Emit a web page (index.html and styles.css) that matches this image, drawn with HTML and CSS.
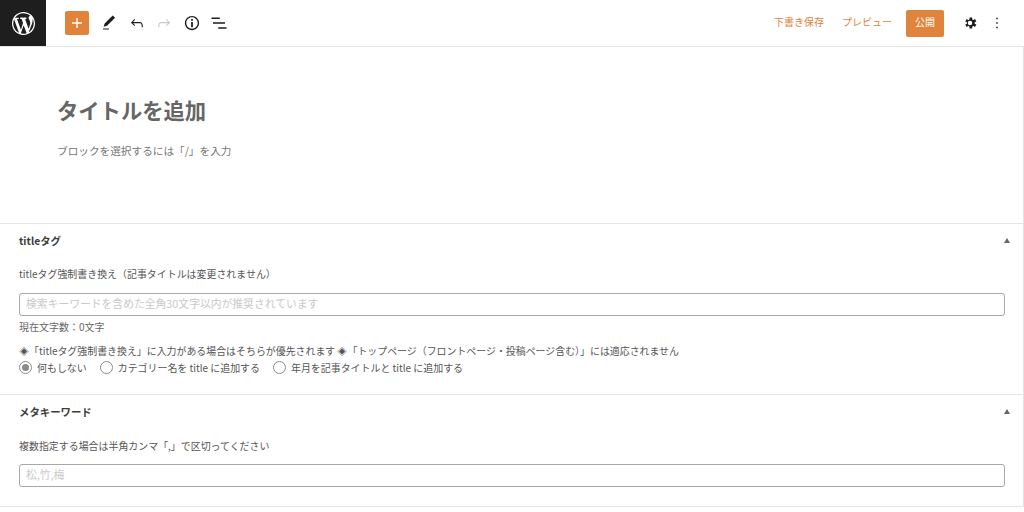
FILE: index.html
```html
<!DOCTYPE html>
<html lang="ja">
<head>
<meta charset="utf-8">
<title>タイトルを追加</title>
<link rel="stylesheet" href="styles.css">
</head>
<body>
<header class="topbar">
  <div class="topbar-left">
    <div class="wp-logo">
      <svg viewBox="0 0 20 20" class="wp-icon"><path fill="#fff" d="M20 10c0-5.51-4.49-10-10-10C4.48 0 0 4.49 0 10c0 5.52 4.48 10 10 10 5.51 0 10-4.48 10-10zM7.78 15.37L4.37 6.22c.55-.02 1.17-.08 1.17-.08.5-.06.44-1.13-.06-1.11 0 0-1.45.11-2.37.11-.18 0-.37 0-.58-.01C4.12 2.69 6.87 1.11 10 1.11c2.33 0 4.45.87 6.05 2.34-.68-.11-1.65.39-1.65 1.58 0 .74.45 1.36.9 2.1.35.61.55 1.36.55 2.46 0 1.49-1.4 5-1.4 5l-3.03-8.37c.54-.02.82-.17.82-.17.5-.05.44-1.25-.06-1.22 0 0-1.44.12-2.38.12-.87 0-2.33-.12-2.33-.12-.5-.03-.56 1.2-.06 1.22l.92.08 1.26 3.41zM17.41 10c.24-.64.74-1.87.43-4.25.7 1.29 1.05 2.71 1.05 4.25 0 3.29-1.73 6.24-4.4 7.78.97-2.59 1.94-5.2 2.92-7.78zM6.1 18.09C3.12 16.65 1.11 13.53 1.11 10c0-1.3.23-2.48.72-3.59C3.25 10.3 4.67 14.2 6.1 18.09zm4.03-6.63l2.58 6.98c-.86.29-1.76.45-2.71.45-.79 0-1.57-.11-2.29-.33.81-2.38 1.62-4.74 2.42-7.1z"/></svg>
    </div>
    <div class="tools">
      <button class="add-btn"><svg viewBox="0 0 24 24" class="plus"><path fill="#fff" d="M18 11.2h-5.2V6h-1.6v5.2H6v1.6h5.2V18h1.6v-5.2H18z"/></svg></button>
      <svg viewBox="0 0 24 24" class="tool"><path fill="#1e1e1e" d="M20.1 5.100L16.900 2 6.200 12.700l-1.300 4.400 4.500-1.300L20.100 5.100zM4 20.800h8v-1.500H4v1.500z"/></svg>
      <svg viewBox="0 0 24 24" class="tool"><path fill="#1e1e1e" d="M18.300 11.700c-.6-.6-1.400-.9-2.300-.9H6.700l2.900-3.300-1.100-1-4.500 5L8.500 16l1-1-2.700-2.700H16c.5 0 .9.2 1.300.5 1 1 1 3.400 1 4.500v.3h1.500v-.2c0-1.500 0-4.300-1.500-5.700z"/></svg>
      <svg viewBox="0 0 24 24" class="tool"><path fill="#c9c9c9" d="M15.600 6.500l-1.100 1 2.900 3.300H8c-.9 0-1.700.3-2.300.9-1.400 1.500-1.400 4.200-1.400 5.600v.2h1.500v-.3c0-1.100 0-3.500 1-4.500.3-.3.7-.5 1.300-.5h9.200L14.500 15l1.100 1.100 4.600-4.600-4.600-5z"/></svg>
      <svg viewBox="0 0 24 24" class="tool"><path fill="#1e1e1e" d="M12 2.500c-5.200 0-9.500 4.300-9.500 9.500s4.300 9.500 9.500 9.500 9.500-4.300 9.500-9.500-4.300-9.500-9.500-9.500zm0 17.100c-4.200 0-7.600-3.400-7.600-7.600S7.800 4.400 12 4.400s7.600 3.400 7.600 7.600-3.400 7.600-7.600 7.600zM10.800 17.500h2.400v-6.800h-2.400v6.800zm0-8.400h2.400V6.700h-2.400v2.400z"/></svg>
      <svg viewBox="0 0 24 24" class="tool"><path fill="#1e1e1e" d="M2 4.500h11v2H2zM4 11h16v2H4zM11 17.500h11v2H11z"/></svg>
    </div>
  </div>
  <div class="topbar-right">
    <span class="link-btn save">下書き保存</span>
    <span class="link-btn preview">プレビュー</span>
    <button class="publish">公開</button>
    <svg viewBox="0 0 24 24" class="gear"><path fill="#1e1e1e" d="M18 12c0-.5.4-.9.9-1.200l1.600-.9-1.800-3.100-1.600.9c-.5.3-1 .3-1.500 0-.5-.3-.7-.7-.7-1.300V4.600h-3.600v1.800c0 .6-.3 1-.7 1.300-.5.3-1 .3-1.500 0l-1.600-.9-1.800 3.100 1.600.9c.5.3.8.7.8 1.200s-.3.900-.8 1.200l-1.600.9 1.800 3.100 1.600-.9c.5-.3 1-.3 1.500 0 .4.300.7.700.7 1.300v1.800h3.600v-1.800c0-.6.2-1 .7-1.300.5-.3 1-.3 1.500 0l1.600.9 1.800-3.100-1.600-.9c-.5-.3-.9-.7-.9-1.200zM12 15a3 3 0 1 1 0-6 3 3 0 0 1 0 6z"/></svg>
    <svg viewBox="0 0 24 24" class="dots"><path fill="#1e1e1e" d="M13 19h-2v-2h2v2zm0-6h-2v-2h2v2zm0-6h-2V5h2v2z"/></svg>
  </div>
</header>
<main class="editor">
  <section class="title-area">
    <h1 class="post-title">タイトルを追加</h1>
    <p class="block-hint">ブロックを選択するには「/」を入力</p>
  </section>
  <section class="metabox box-title">
    <div class="box-head"><h2>titleタグ</h2><span class="caret"></span></div>
    <label class="field-label">titleタグ強制書き換え（記事タイトルは変更されません）</label>
    <input class="text-input" type="text" placeholder="検索キーワードを含めた全角30文字以内が推奨されています">
    <p class="counter">現在文字数：0文字</p>
    <p class="note">◈「titleタグ強制書き換え」に入力がある場合はそちらが優先されます ◈「トップページ（フロントページ・投稿ページ含む）」には適応されません</p>
    <div class="radios">
      <span class="radio-item"><span class="radio checked"></span>何もしない</span>
      <span class="radio-item"><span class="radio"></span>カテゴリー名を title に追加する</span>
      <span class="radio-item"><span class="radio"></span>年月を記事タイトルと title に追加する</span>
    </div>
  </section>
  <section class="metabox box-keyword">
    <div class="box-head"><h2>メタキーワード</h2><span class="caret"></span></div>
    <label class="field-label">複数指定する場合は半角カンマ「,」で区切ってください</label>
    <input class="text-input" type="text" placeholder="松,竹,梅">
  </section>
</main>
</body>
</html>
```
FILE: styles.css
```css
* { box-sizing: border-box; }
html, body { margin: 0; height: 100%; overflow: hidden; background: #fff; }
body { font-family: "Noto Sans CJK JP", "Liberation Sans", sans-serif; color: #555; }
button { border: 0; padding: 0; font: inherit; }

.topbar { height: 47px; border-bottom: 1px solid #e2e4e7; display: flex; justify-content: space-between; align-items: center; }
.topbar-left { display: flex; align-items: center; height: 46px; }
.wp-logo { width: 46px; height: 46px; background: #1e1e1e; display: flex; align-items: center; justify-content: center; }
.wp-icon { width: 23px; height: 23px; }
.tools { display: flex; align-items: center; margin-left: 19px; }
.add-btn { width: 24px; height: 24px; background: #e0843c; border-radius: 2px; display: flex; align-items: center; justify-content: center; margin-right: 11px; }
.plus { width: 20px; height: 20px; }
.tool { width: 18px; height: 18px; margin-right: 9.5px; }

.topbar-right { display: flex; align-items: center; height: 46px; padding-right: 18px; }
.link-btn { font-size: 10px; line-height: 14px; margin-top: -3px; color: #e0843c; }
.save { margin-right: 18px; }
.preview { margin-right: 14px; }
.publish { width: 38px; height: 27px; padding-bottom: 3px; background: #e0843c; color: #fff; font-size: 10px; border-radius: 2px; margin-right: 17px; }
.gear { width: 18px; height: 18px; margin-right: 9px; }
.dots { width: 18px; height: 24px; }

.editor { border-right: 1px solid #e2e4e7; height: 460px; }
.title-area { height: 177px; padding: 48px 57px 0; border-bottom: 1px solid #e2e4e7; }
.post-title { margin: 0; font-size: 21.3px; line-height: 29px; font-weight: 700; color: #666; }
.block-hint { margin: 19px 0 0; font-size: 10.65px; line-height: 15px; color: #757575; }

.metabox { padding: 0 18px 0 19px; border-bottom: 1px solid #e2e4e7; }
.box-title { height: 171px; }
.box-keyword { height: 112px; }
.box-head { height: 32px; display: flex; align-items: center; justify-content: space-between; }
.box-head h2 { margin: 0; font-size: 10.4px; font-weight: 700; color: #3c3c3c; }
.caret { width: 0; height: 0; border-left: 3px solid transparent; border-right: 3px solid transparent; border-bottom: 5px solid #666; margin-right: -5px; }
.field-label { display: block; margin-top: 11px; font-size: 9.95px; line-height: 14px; color: #555; }
.box-keyword .field-label { margin-top: 12px; }
.text-input { display: block; width: 100%; height: 23px; margin-top: 12px; padding: 0 6px 4px; border: 1px solid #a8a8a8; border-radius: 3px; font: 10.8px "Noto Sans CJK JP", sans-serif; background: #fff; outline: 0; }
.box-keyword .text-input { margin-top: 11px; }
.text-input::placeholder { color: #c9c9c9; }
.counter { margin: 4px 0 0; font-size: 10px; line-height: 14px; color: #666; }
.note { margin: 10px 0 0; font-size: 9.93px; line-height: 14px; color: #555; white-space: nowrap; }
.radios { display: flex; gap: 13px; margin-top: 2px; }
.radio-item { display: flex; align-items: center; gap: 5px; font-size: 9.95px; line-height: 15px; color: #555; }
.radio { width: 13px; height: 13px; border: 1px solid #8a8a8a; border-radius: 50%; display: flex; align-items: center; justify-content: center; }
.radio.checked::after { content: ""; width: 7px; height: 7px; border-radius: 50%; background: #8a8a8a; }
```
